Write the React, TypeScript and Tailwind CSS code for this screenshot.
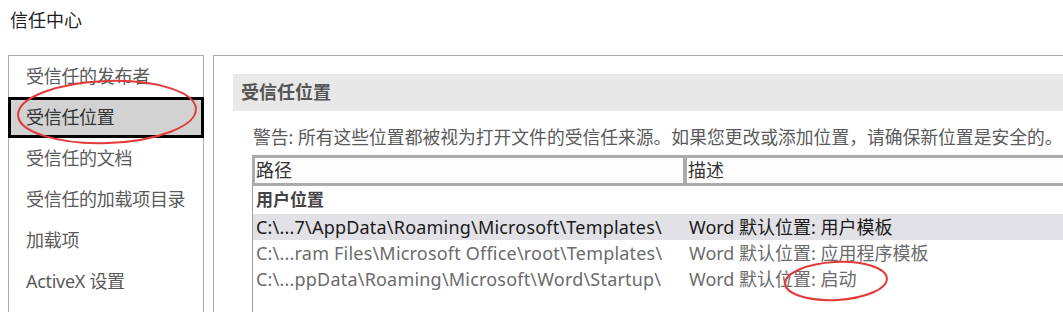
const font = { fontFamily: '"Noto Sans", "Noto Sans CJK SC", sans-serif' };

const navItems = ['受信任的发布者', '受信任位置', '受信任的文档', '受信任的加载项目录', '加载项', 'ActiveX 设置'];

const rows = [
  { path: 'C:\\...7\\AppData\\Roaming\\Microsoft\\Templates\\', desc: 'Word 默认位置: 用户模板', active: true },
  { path: 'C:\\...ram Files\\Microsoft Office\\root\\Templates\\', desc: 'Word 默认位置: 应用程序模板', active: false },
  { path: 'C:\\...ppData\\Roaming\\Microsoft\\Word\\Startup\\', desc: 'Word 默认位置: 启动', active: false },
];

export default function App() {
  return (
    <div className="relative h-[312px] w-[1063px] overflow-hidden bg-white" style={font}>
      {/* Title */}
      <div className="pl-[10px] pt-[7px] text-[18px] leading-[26px] text-[#1f1f1f]">信任中心</div>

      <div className="mt-[22px] flex">
        {/* Left nav */}
        <div className="ml-[8px] h-[300px] w-[196px] shrink-0 border border-[#acacac]">
          {navItems.map((item, i) =>
            i === 1 ? (
              <div
                key={item}
                className="-mx-px flex h-[41px] items-center border-[3px] border-black bg-[#d2d2d2] pl-[15px] text-[18px] tracking-[-0.3px] text-[#333]"
              >
                {item}
              </div>
            ) : (
              <div key={item} className="flex h-[41px] items-center pl-[17px] text-[18px] tracking-[-0.3px] text-[#5a5a5a]">
                {item}
              </div>
            )
          )}
        </div>

        {/* Right panel */}
        <div className="ml-[9px] h-[300px] flex-1 border-l border-t border-[#acacac]">
          <div className="ml-[19px] mt-[18px] flex h-[37px] items-center bg-[#e8e8e8] pl-[8px] text-[18px] font-bold text-[#555]">
            受信任位置
          </div>

          <div className="ml-[39px] mt-[13px] whitespace-nowrap text-[17.8px] leading-[26px] text-[#5a5a5a]">
            警告: 所有这些位置都被视为打开文件的受信任来源。如果您更改或添加位置，请确保新位置是安全的。
          </div>

          {/* Table */}
          <div className="ml-[38px] mt-[5px]">
            <div className="flex h-[31px] border-[3px] border-r-0 border-[#ababab] bg-[#fdfdfd] text-[18px] text-[#333]">
              <div className="flex w-[432px] items-center border-r-[4px] border-[#ababab] pl-[1px]">路径</div>
              <div className="flex flex-1 items-center pl-[1px]">描述</div>
            </div>
            <div className="border-l border-[#a0a0a0]">
              <div className="flex h-[28px] items-center pl-[3px] text-[17px] font-bold text-[#444]">用户位置</div>
              {rows.map((r) => (
                <div
                  key={r.path}
                  className={`flex h-[26px] items-center whitespace-nowrap text-[18px] ${
                    r.active ? 'bg-[#e1e1e6] text-[#1a1a1a]' : 'text-[#6b6b6b]'
                  }`}
                >
                  <div className="w-[436px] shrink-0 pl-[3px] tracking-[0.2px]">{r.path}</div>
                  <div>{r.desc}</div>
                </div>
              ))}
              <div className="h-[40px]" />
            </div>
          </div>
        </div>
      </div>

      {/* Red annotation ellipses */}
      <svg className="pointer-events-none absolute left-0 top-0" width="1063" height="312">
        <ellipse cx="107" cy="112" rx="89" ry="31" fill="none" stroke="#e23a3a" strokeWidth="2" transform="rotate(-2 107 112)" />
        <ellipse cx="836" cy="281" rx="51" ry="19" fill="none" stroke="#e23a3a" strokeWidth="2" transform="rotate(-3 836 281)" />
      </svg>
    </div>
  );
}
